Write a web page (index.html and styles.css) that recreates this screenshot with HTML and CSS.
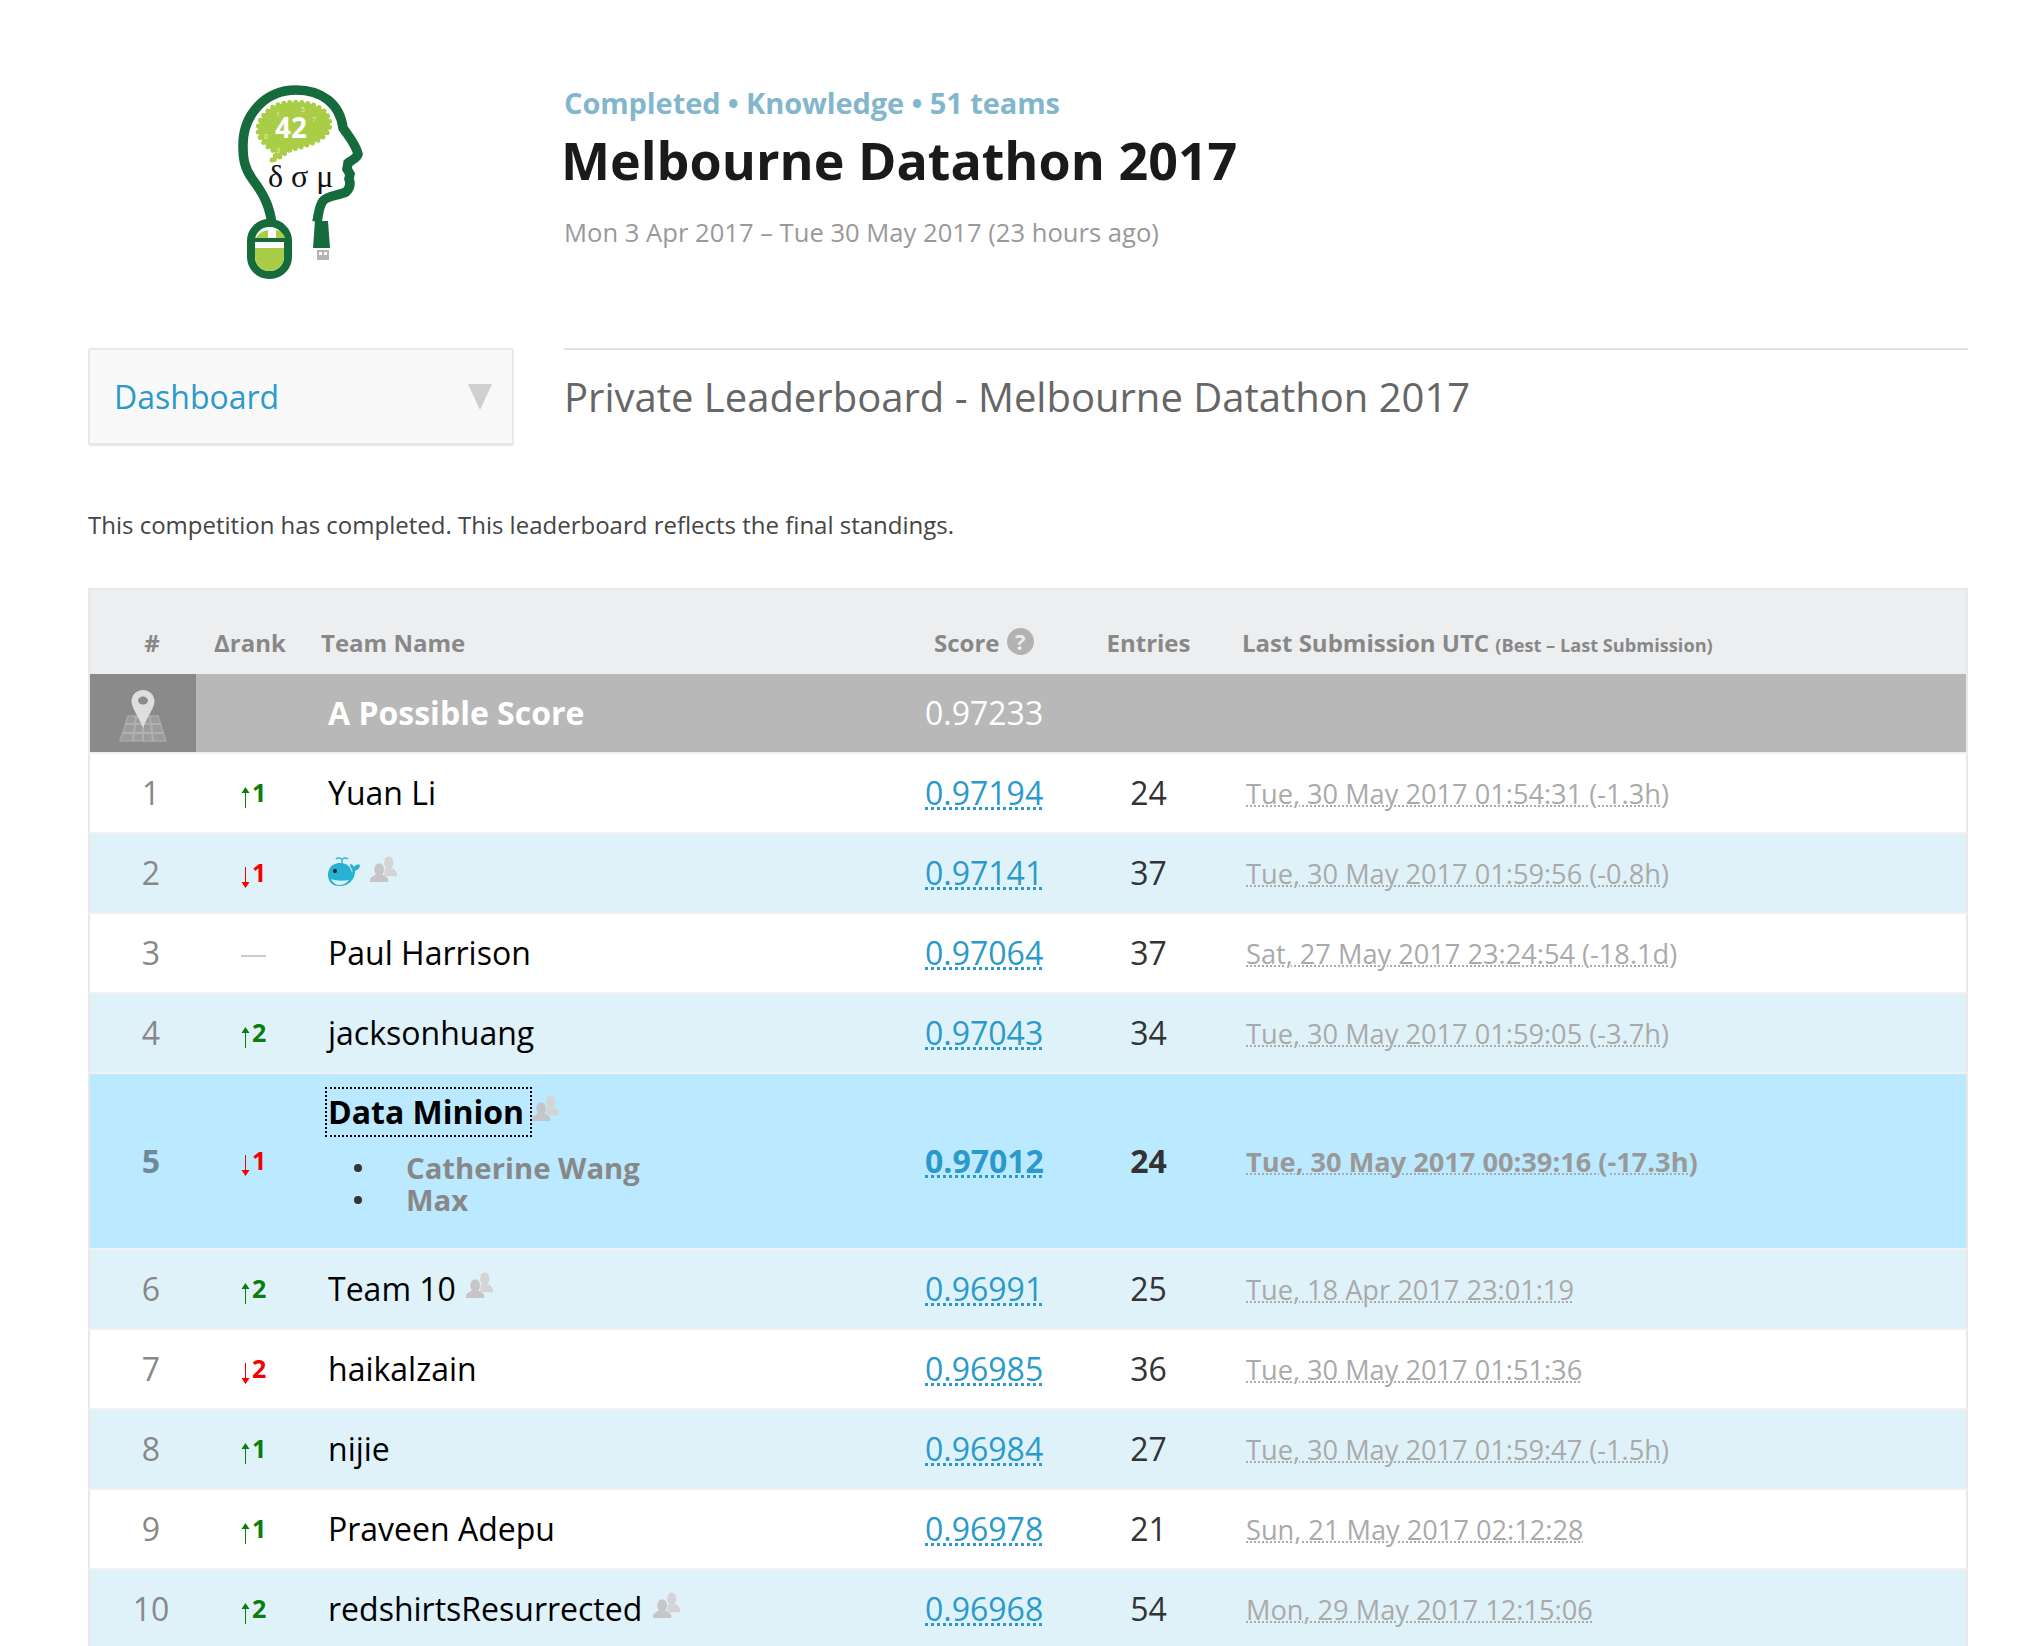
FILE: index.html
```html
<!DOCTYPE html>
<html lang="en">
  <head>
    <meta charset="UTF-8" />
    <title>Private Leaderboard - Melbourne Datathon 2017</title>
    <link rel="stylesheet" href="styles.css">
  </head>
  <body>
    <svg width="0" height="0" class="defs">
      <symbol id="people" viewBox="0 0 28 28">
        <ellipse cx="19.500" cy="7" rx="4.800" ry="6.500" fill="#d4d4d4"/>
        <path fill="#d4d4d4" d="M15 13h9c2 2 4 3 4 6v2H15z"/>
        <ellipse cx="9.500" cy="14" rx="5" ry="6.500" fill="#c6c6c6"/>
        <path fill="#c6c6c6" d="M6 19h7c2 2 6 3 6 6v2H0v-2c0-3 4-4 6-6z"/>
      </symbol>
      <symbol id="arrow_up" viewBox="0 0 9 21">
        <path fill="currentColor" d="M4.500 0L8.500 6H5V21H4V6H.5z"/>
      </symbol>
      <symbol id="arrow_down" viewBox="0 0 9 21">
        <path fill="currentColor" d="M4.500 21L8.500 15H5V0H4V15H.5z"/>
      </symbol>
    </svg>

    <div class="page">
      <header class="comp_header">
        <div class="logo_col">
          <svg class="logo" width="200" height="240" viewBox="0 0 200 240">
            <path fill="none" stroke="#156b3c" stroke-width="9.500" d="M72 182L72 165C70 145 62 132 53 120 44 108 43 98 43 85 43 55 65 30 96 30 122 30 140 44 143 68 150 78 156 85 158 94 157 98 152 100 148 103L147 109 150 114 149 119C151 124 150 128 146 132 138 136 128 135 123 141 119 146 119 152 117 162"/>
            <path fill="#aacd48" stroke="#aacd48" stroke-width="5" stroke-linecap="round" stroke-dasharray="0 6" d="M72 100C76 98 76 95 74 91 66 86 58 78 58 70 58 60 66 50 77 45 88 41 110 40 123 50 130 56 132 66 127 73 120 82 105 86 90 90 85 92 80 99 72 100Z"/>
            <text class="logo_42" x="75" y="78">42</text>
            <text class="logo_tiny" x="76" y="57">1</text>
            <text class="logo_tiny" x="101" y="52">5</text>
            <text class="logo_tiny" x="112" y="62">7</text>
            <text class="logo_tiny" x="64" y="79">0</text>
            <text class="logo_tiny" x="76" y="93">3</text>
            <text class="logo_greek" x="68" y="127">δ σ μ</text>
            <rect x="51" y="163" width="37" height="52" rx="18" fill="#fff" stroke="#156b3c" stroke-width="8"/>
            <path fill="#aacd48" d="M56 178c2-4 6-7 12-8v8zM76 170c5 1 8 4 9 8h-9z"/>
            <path fill="#aacd48" d="M55 188h29v8.500a14.500 14.500 0 0 1-29 0z"/>
            <path fill="#156b3c" d="M52 178h36v4H52z"/>
            <path fill="#156b3c" d="M115 160h3l1 1h9l2 27h-17z"/>
            <rect x="117" y="190" width="12" height="10" fill="#b4b4b4"/>
            <rect x="119" y="192" width="3" height="3" fill="#fff"/>
            <rect x="124" y="192" width="3" height="3" fill="#fff"/>
          </svg>
        </div>
        <div class="comp_meta">
          <div class="comp_tags">Completed • Knowledge • 51 teams</div>
          <h1>Melbourne Datathon 2017</h1>
          <div class="comp_dates">Mon 3 Apr 2017 – Tue 30 May 2017 (23 hours ago)</div>
        </div>
      </header>

      <div class="nav_row">
        <div class="dropdown">
          <span>Dashboard</span>
          <i class="caret"></i>
        </div>
        <h2>Private Leaderboard - Melbourne Datathon 2017</h2>
      </div>

      <p class="notice">This competition has completed. This leaderboard reflects the final standings.</p>

      <table class="board">
        <colgroup>
          <col class="c_rank"><col class="c_delta"><col class="c_team"><col class="c_score"><col class="c_entries"><col class="c_last">
        </colgroup>
        <thead>
          <tr>
            <th class="center th_rank">#</th>
            <th class="th_delta">Δrank</th>
            <th class="th_team">Team Name</th>
            <th class="th_score">Score
              <span class="help">?</span>
            </th>
            <th class="center">Entries</th>
            <th class="th_last">Last Submission UTC <small>(Best – Last Submission)</small></th>
          </tr>
        </thead>
        <tbody>
          <tr class="benchmark">
            <td class="pin_cell">
              <svg width="48" height="52" viewBox="0 0 48 52">
                <path fill="#9c9c9c" stroke="#a8a8a8" stroke-width="1.500" d="M9 26h30l8 25H1z"/>
                <path fill="none" stroke="#b0b0b0" stroke-width="2" d="M6 34h36M4 43h40M17 26l-3 25M31 26l3 25M24 26v25"/>
                <path fill="#dedede" d="M24 0c6.500 0 11.500 5 11.500 11.500C35.500 18 28 27 24 38c-4-11-11.500-20-11.500-26.500C12.500 5 17.500 0 24 0z"/>
                <ellipse cx="24" cy="10.500" rx="5" ry="4" fill="#8a8a8a"/>
              </svg>
            </td>
            <td></td>
            <td class="team">A Possible Score</td>
            <td class="score">0.97233</td>
            <td></td>
            <td></td>
          </tr>
          <tr>
            <td class="rank">1</td>
            <td class="delta up"><svg class="arrow"><use href="#arrow_up"/></svg>1</td>
            <td class="team">Yuan Li</td>
            <td class="score"><a>0.97194</a></td>
            <td class="entries">24</td>
            <td class="last"><span>Tue, 30 May 2017 01:54:31 (-1.3h)</span></td>
          </tr>
          <tr class="alt">
            <td class="rank">2</td>
            <td class="delta down"><svg class="arrow"><use href="#arrow_down"/></svg>1</td>
            <td class="team">
              <svg class="whale" width="32" height="31" viewBox="0 0 32 31">
                <path fill="none" stroke="#3fb6dc" stroke-width="1.500" d="M14 9V4M14 4c-1-2-4-3-6-1M14 4c1-2 4-3 6-1"/>
                <path fill="#27b2d3" d="M12 7c7 0 11 4 12 10 1-2 0-4-1-5-1-2-1-3-1-4 2 0 3 1 4 3 1-2 3-3 6-2 0 3-2 5-5 6 0 6-3 11-9 14-6 2-13 1-15-2C0 24-1 18 1 14 3 9 7 7 12 7z"/>
                <path fill="#d7f0f5" d="M3 23c5 2 13 2 18 1-3 4-6 5-10 5-3 0-6-2-8-6z"/>
                <circle cx="7" cy="15" r="2" fill="#123"/>
              </svg>
              <svg class="people"><use href="#people"/></svg>
            </td>
            <td class="score"><a>0.97141</a></td>
            <td class="entries">37</td>
            <td class="last"><span>Tue, 30 May 2017 01:59:56 (-0.8h)</span></td>
          </tr>
          <tr>
            <td class="rank">3</td>
            <td class="delta same"><i class="dash"></i></td>
            <td class="team">Paul Harrison</td>
            <td class="score"><a>0.97064</a></td>
            <td class="entries">37</td>
            <td class="last"><span>Sat, 27 May 2017 23:24:54 (-18.1d)</span></td>
          </tr>
          <tr class="alt">
            <td class="rank">4</td>
            <td class="delta up"><svg class="arrow"><use href="#arrow_up"/></svg>2</td>
            <td class="team">jacksonhuang</td>
            <td class="score"><a>0.97043</a></td>
            <td class="entries">34</td>
            <td class="last"><span>Tue, 30 May 2017 01:59:05 (-3.7h)</span></td>
          </tr>
          <tr class="mine">
            <td class="rank">5</td>
            <td class="delta down"><svg class="arrow"><use href="#arrow_down"/></svg>1</td>
            <td class="team">
              <span class="focus_name">Data Minion</span><svg class="people"><use href="#people"/></svg>
              <ul class="members">
                <li>Catherine Wang</li>
                <li>Max</li>
              </ul>
            </td>
            <td class="score"><a>0.97012</a></td>
            <td class="entries">24</td>
            <td class="last"><span>Tue, 30 May 2017 00:39:16 (-17.3h)</span></td>
          </tr>
          <tr class="alt">
            <td class="rank">6</td>
            <td class="delta up"><svg class="arrow"><use href="#arrow_up"/></svg>2</td>
            <td class="team">Team 10 <svg class="people"><use href="#people"/></svg></td>
            <td class="score"><a>0.96991</a></td>
            <td class="entries">25</td>
            <td class="last"><span>Tue, 18 Apr 2017 23:01:19</span></td>
          </tr>
          <tr>
            <td class="rank">7</td>
            <td class="delta down"><svg class="arrow"><use href="#arrow_down"/></svg>2</td>
            <td class="team">haikalzain</td>
            <td class="score"><a>0.96985</a></td>
            <td class="entries">36</td>
            <td class="last"><span>Tue, 30 May 2017 01:51:36</span></td>
          </tr>
          <tr class="alt">
            <td class="rank">8</td>
            <td class="delta up"><svg class="arrow"><use href="#arrow_up"/></svg>1</td>
            <td class="team">nijie</td>
            <td class="score"><a>0.96984</a></td>
            <td class="entries">27</td>
            <td class="last"><span>Tue, 30 May 2017 01:59:47 (-1.5h)</span></td>
          </tr>
          <tr>
            <td class="rank">9</td>
            <td class="delta up"><svg class="arrow"><use href="#arrow_up"/></svg>1</td>
            <td class="team">Praveen Adepu</td>
            <td class="score"><a>0.96978</a></td>
            <td class="entries">21</td>
            <td class="last"><span>Sun, 21 May 2017 02:12:28</span></td>
          </tr>
          <tr class="alt">
            <td class="rank">10</td>
            <td class="delta up"><svg class="arrow"><use href="#arrow_up"/></svg>2</td>
            <td class="team">redshirtsResurrected <svg class="people"><use href="#people"/></svg></td>
            <td class="score"><a>0.96968</a></td>
            <td class="entries">54</td>
            <td class="last"><span>Mon, 29 May 2017 12:15:06</span></td>
          </tr>
        </tbody>
      </table>
    </div>
  </body>
</html>
```

FILE: styles.css
```css
* {
  margin: 0;
  padding: 0;
  box-sizing: border-box;
}
html,
body {
  height: 100vh;
  overflow: hidden;
  background: #fff;
}
body {
  font-family: "Open Sans", sans-serif;
  color: #333;
}
.defs {
  position: absolute;
}
.page {
  padding: 0 74px 0 88px;
}

/* top block */
.comp_header {
  display: flex;
  height: 348px;
}
.logo_col {
  width: 476px;
  padding: 60px 0 0 112px;
}
.logo {
  display: block;
}
.logo_42 {
  font: 700 28px "Open Sans", sans-serif;
  fill: #fff;
}
.logo_tiny {
  font: 400 7px "Open Sans", sans-serif;
  fill: #e6f0c4;
}
.logo_greek {
  font: 400 32px "Liberation Serif", serif;
  fill: #111;
}
.comp_meta {
  padding-top: 83px;
}
.comp_tags {
  font-size: 29px;
  font-weight: 700;
  letter-spacing: -0.1px;
  line-height: 40px;
  color: #82b7cb;
}
h1 {
  font-size: 52px;
  font-weight: 700;
  line-height: 68px;
  color: #1a1a1a;
  margin-top: 3px;
  margin-left: -3px;
}
.comp_dates {
  font-size: 25.6px;
  line-height: 36px;
  margin-top: 21px;
  color: #999;
}

/* dropdown + title */
.nav_row {
  display: flex;
  gap: 50px;
}
.dropdown {
  width: 426px;
  height: 98px;
  flex: none;
  display: flex;
  align-items: center;
  justify-content: space-between;
  padding: 0 20px 0 24px;
  background: #f9f9f9;
  border: 2px solid #e8e8e8;
  border-bottom-width: 3px;
  border-radius: 3px;
  font-size: 32px;
  color: #2b9acb;
}
.caret {
  width: 0;
  height: 0;
  border-left: 12px solid transparent;
  border-right: 12px solid transparent;
  border-top: 26px solid #cfcfcf;
}
h2 {
  flex: 1;
  border-top: 2px solid #e2e2e2;
  padding-top: 20px;
  font-size: 40px;
  line-height: 54px;
  font-weight: 400;
  color: #666;
}
.notice {
  margin-top: 59px;
  font-size: 24px;
  line-height: 40px;
  color: #444;
}

/* leaderboard */
.board {
  width: 1880px;
  margin-top: 43px;
  border-collapse: collapse;
  table-layout: fixed;
  border: 2px solid #e8e8e8;
  font-size: 32px;
}
.c_rank { width: 107px; }
.c_delta { width: 125px; }
.c_team { width: 604px; }
.c_score { width: 134px; }
.c_entries { width: 179px; }
.c_last { width: auto; }

thead tr {
  height: 85px;
  background: #edeef0;
}
th {
  font-size: 24px;
  font-weight: 700;
  color: #888;
  text-align: left;
  vertical-align: bottom;
  padding-bottom: 15px;
  white-space: nowrap;
}
th small {
  font-size: 18.2px;
}
.center {
  text-align: center;
}
.th_rank {
  padding-left: 18px;
}
.th_delta {
  padding-left: 18px;
}
.th_team {
  padding-left: 0;
}
.th_score {
  padding-left: 9px;
}
.th_last {
  padding-left: 4px;
}
.help {
  display: inline-block;
  width: 27px;
  height: 27px;
  margin-left: 1px;
  border-radius: 50%;
  background: #b2b2b2;
  color: #ececec;
  font-size: 22px;
  line-height: 27px;
  text-align: center;
  vertical-align: 2px;
}

tbody tr {
  height: 80px;
  background: #fff;
}
tbody td {
  border-bottom: 2px solid #f0f0f0;
  padding-bottom: 2px;
  white-space: nowrap;
}
tbody tr.alt {
  background: #dff2f9;
}
tbody tr.benchmark {
  height: 79px;
  background: #b8b8b8;
  color: #fff;
}
tbody .pin_cell {
  background: #8a8a8a;
  text-align: center;
  padding: 14px 0 0;
}
.benchmark .team {
  font-weight: 700;
  color: #fff;
}
.benchmark .score {
  color: #fff;
}
.rank {
  text-align: center;
  color: #888;
  padding-left: 16px;
}
.delta {
  font-size: 25px;
  font-weight: 700;
  padding-left: 45px;
}
.arrow {
  width: 9px;
  height: 21px;
  margin-right: 2px;
  vertical-align: -6px;
}
.up {
  color: #0a7d0a;
}
.down {
  color: #f50000;
}
.dash {
  display: inline-block;
  width: 25px;
  height: 2px;
  margin-bottom: 5px;
  background: #ccc;
}
.team {
  color: #000;
}
tbody .team {
  padding-left: 7px;
}
.whale {
  vertical-align: -2px;
}
.people {
  width: 27px;
  height: 27px;
  vertical-align: 2px;
  margin-left: 2px;
}
.score a {
  color: #2b9acb;
  text-decoration: underline dotted #2b9acb 3px;
  text-underline-offset: 2px;
}
.entries {
  text-align: center;
  color: #333;
}
.last {
  font-size: 27.2px;
  color: #aaa;
  padding-left: 8px;
  padding-top: 2px;
}
.last span {
  text-decoration: underline dotted #aaa 2px;
  text-underline-offset: 2px;
}

/* own team row */
tbody tr.mine {
  height: 176px;
  background: #bbe9ff;
}
.mine td {
  font-weight: 700;
}
.mine .rank {
  color: #6e8a98;
}
.mine .last {
  color: #999;
}
tbody .mine .team {
  padding-top: 2px;
}
.focus_name {
  display: inline-block;
  outline: 2px dotted #000;
  line-height: 46px;
  padding: 0 6px 0 1px;
  margin-left: -1px;
}
.members {
  margin: 17px 0;
  padding-left: 26px;
  list-style: none;
  font-size: 29.3px;
  line-height: 32px;
  color: #888;
}
.members li {
  display: flex;
  align-items: center;
}
.members li::before {
  content: "";
  width: 8px;
  height: 8px;
  margin-right: 44px;
  border-radius: 50%;
  background: #333;
}
```
